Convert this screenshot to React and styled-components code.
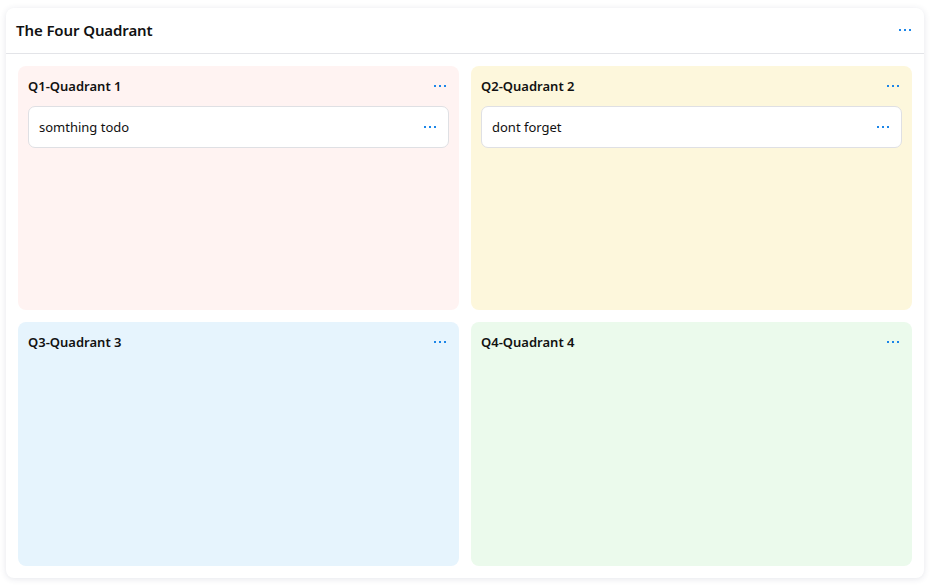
import React from "react";
import styled, { createGlobalStyle } from "styled-components";

const Global = createGlobalStyle`
  html, body { margin: 0; padding: 0; background: #ffffff; }
  body { font-family: "Noto Sans", "Open Sans", sans-serif; color: #111; }
  * { box-sizing: border-box; }
`;

const Page = styled.div`
  padding: 8px 10px 10px 6px;
  width: 934px;
  height: 588px;
`;

const Card = styled.div`
  width: 918px;
  height: 570px;
  background: #fff;
  border-radius: 8px;
  box-shadow: 0 1px 6px rgba(40, 50, 90, 0.12);
  display: flex;
  flex-direction: column;
`;

const Header = styled.div`
  height: 46px;
  flex: none;
  border-bottom: 1px solid #e3e4e8;
  display: flex;
  align-items: center;
  justify-content: space-between;
  padding: 0 13px 2px 10px;
`;

const Title = styled.h1`
  margin: 0;
  font-size: 15px;
  font-weight: 600;
  letter-spacing: -0.1px;
`;

const Grid = styled.div`
  flex: 1;
  display: grid;
  grid-template-columns: 1fr 1fr;
  grid-template-rows: 1fr 1fr;
  gap: 12px;
  padding: 12px;
`;

const Panel = styled.div`
  background: ${(p) => p.$bg};
  border-radius: 8px;
  padding: 0 10px;
  display: flex;
  flex-direction: column;
`;

const PanelHead = styled.div`
  height: 40px;
  display: flex;
  align-items: center;
  justify-content: space-between;
  padding-right: 3px;
`;

const PanelTitle = styled.div`
  font-size: 13px;
  font-weight: 600;
`;

const Item = styled.div`
  height: 42px;
  background: #fff;
  border: 1px solid #dfe0e4;
  border-radius: 7px;
  display: flex;
  align-items: center;
  justify-content: space-between;
  padding: 0 12px 0 10px;
  font-size: 13px;
`;

const Dots = styled.span`
  display: inline-flex;
  gap: 3px;
  align-items: center;
  cursor: pointer;
  padding: 2px 0;
  & > i {
    display: block;
    width: 2px;
    height: 2px;
    background: #1c86e8;
  }
`;

const More = () => (
  <Dots>
    <i />
    <i />
    <i />
  </Dots>
);

const quads = [
  { title: "Q1-Quadrant 1", bg: "#fff3f2", items: ["somthing todo"] },
  { title: "Q2-Quadrant 2", bg: "#fdf7dc", items: ["dont forget"] },
  { title: "Q3-Quadrant 3", bg: "#e6f4fd", items: [] },
  { title: "Q4-Quadrant 4", bg: "#ebfaec", items: [] },
];

export default function App() {
  return (
    <>
      <Global />
      <Page>
        <Card>
          <Header>
            <Title>The Four Quadrant</Title>
            <More />
          </Header>
          <Grid>
            {quads.map((q) => (
              <Panel key={q.title} $bg={q.bg}>
                <PanelHead>
                  <PanelTitle>{q.title}</PanelTitle>
                  <More />
                </PanelHead>
                {q.items.map((t) => (
                  <Item key={t}>
                    <span>{t}</span>
                    <More />
                  </Item>
                ))}
              </Panel>
            ))}
          </Grid>
        </Card>
      </Page>
    </>
  );
}
